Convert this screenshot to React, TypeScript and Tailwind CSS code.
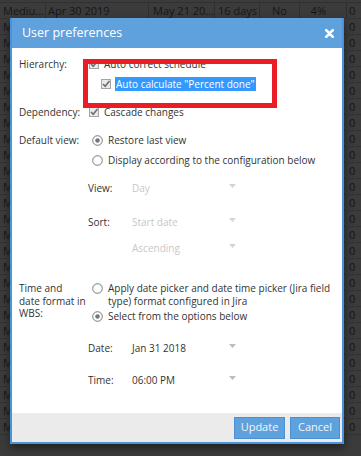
import React from 'react';

const font = { fontFamily: '"Open Sans", "Liberation Sans", sans-serif' };

const Check = ({ className = '' }: { className?: string }) => (
  <svg width="10" height="10" viewBox="0 0 10 10" className={className}>
    <rect x="0.5" y="0.5" width="9" height="9" fill="#e9e9e9" stroke="#a5a5a5" />
    <path d="M2 5 L4.2 7.2 L8.5 2" fill="none" stroke="#6e6e6e" strokeWidth="1.6" />
  </svg>
);

const Radio = ({ checked }: { checked?: boolean }) => (
  <svg width="11" height="11" viewBox="0 0 11 11" className="shrink-0">
    <circle cx="5.5" cy="5.5" r="4.8" fill="#fff" stroke="#777" strokeWidth="1" />
    {checked && <circle cx="5.5" cy="5.5" r="2.3" fill="#777" />}
  </svg>
);

const Arrow = ({ color = '#c9c9c9' }: { color?: string }) => (
  <svg width="7" height="4" viewBox="0 0 7 4">
    <path d="M0 0 L7 0 L3.5 4 Z" fill={color} />
  </svg>
);

const Select = ({ value, disabled }: { value: string; disabled?: boolean }) => (
  <div className="flex items-center w-[104px] justify-between">
    <span className={disabled ? 'text-[#c8c8c8]' : 'text-[#333]'}>{value}</span>
    <span className="mb-1"><Arrow color={disabled ? '#d4d4d4' : '#bdbdbd'} /></span>
  </div>
);

const rows = Array.from({ length: 26 });

export default function App() {
  return (
    <div className="relative w-[361px] h-[456px] overflow-hidden bg-[#3b3b3b] text-[11px] text-[#161616]" style={font}>
      {/* background grid, dimmed by overlay */}
      <div className="h-[3px] border-b border-[#303030]" />
      <div className="flex h-4 border-b border-[#333] leading-4">
        <div className="w-[46px] pl-[3px] border-r border-[#2e2e2e] truncate">Mediu...</div>
        <div className="w-[103px] pl-[2px] border-r border-[#2e2e2e]">Apr 30 2019</div>
        <div className="w-[66px] pl-[4px] border-r border-[#2e2e2e] truncate">May 21 20...</div>
        <div className="w-[45px] pl-[3px] border-r border-[#2e2e2e]">16 days</div>
        <div className="w-[40px] text-center border-r border-[#2e2e2e]">No</div>
        <div className="w-[47px] pr-[20px] text-right border-r border-[#2e2e2e]">4%</div>
        <div className="pl-[2px]">0</div>
      </div>
      {rows.map((_, i) => (
        <div key={i} className="flex h-4 border-b border-[#333] leading-4">
          <div className="w-[46px] pl-[3px] border-r border-[#2e2e2e] overflow-hidden whitespace-nowrap">M</div>
          <div className="w-[301px]" />
          <div className="pl-[2px]">0</div>
        </div>
      ))}

      {/* modal */}
      <div className="absolute left-[10px] top-[18px] w-[334px] h-[426px] flex flex-col bg-white border-x-2 border-b-2 border-[#4a93dc] shadow-[0_4px_8px_rgba(0,0,0,0.45)] text-[10px] text-[#333]">
        <div className="h-[30px] shrink-0 bg-[#5fa1dc] flex items-center justify-between pl-[10px] pr-[8px]">
          <span className="text-[12.5px] text-white">User preferences</span>
          <svg width="9" height="9" viewBox="0 0 9 9">
            <path d="M1.2 1.2 L7.8 7.8 M7.8 1.2 L1.2 7.8" stroke="#fff" strokeWidth="2.6" strokeLinecap="round" />
          </svg>
        </div>

        <div className="relative flex-1 pl-[7px] pt-[9px] leading-[14px]">
          <div className="flex h-[14px] items-center">
            <div className="w-[70px]">Hierarchy:</div>
            <Check />
            <span className="ml-[5px]">Auto correct schedule</span>
          </div>
          <div className="flex h-[14px] items-center mt-[6px] pl-[82px]">
            <Check />
            <span className="ml-[4px] bg-[#3399ff] text-white px-[1px]">Auto calculate "Percent done"</span>
          </div>
          <div className="flex h-[14px] items-center mt-[14px]">
            <div className="w-[70px]">Dependency:</div>
            <Check />
            <span className="ml-[5px]">Cascade changes</span>
          </div>
          <div className="flex h-[14px] items-center mt-[14px]">
            <div className="w-[73px]">Default view:</div>
            <Radio checked />
            <span className="ml-[5px]">Restore last view</span>
          </div>
          <div className="flex h-[14px] items-center mt-[6px] pl-[73px]">
            <Radio />
            <span className="ml-[5px]">Display according to the configuration below</span>
          </div>
          <div className="flex h-[14px] items-center mt-[14px] pl-[69px]">
            <div className="w-[44px]">View:</div>
            <Select value="Day" disabled />
          </div>
          <div className="flex h-[14px] items-center mt-[20px] pl-[69px]">
            <div className="w-[44px]">Sort:</div>
            <Select value="Start date" disabled />
          </div>
          <div className="flex h-[14px] items-center mt-[12px] pl-[113px]">
            <Select value="Ascending" disabled />
          </div>

          <div className="flex mt-[27px] leading-[12.5px]">
            <div className="w-[73px] shrink-0">Time and<br />date format in<br />WBS:</div>
            <div className="flex flex-col">
              <div className="flex items-start">
                <span className="mt-[1px]"><Radio /></span>
                <span className="ml-[5px]">Apply date picker and date time picker (Jira field<br />type) format configured in Jira</span>
              </div>
              <div className="flex items-center mt-[3px]">
                <Radio checked />
                <span className="ml-[5px]">Select from the options below</span>
              </div>
            </div>
          </div>
          <div className="flex h-[14px] items-center mt-[18px] pl-[69px]">
            <div className="w-[44px]">Date:</div>
            <Select value="Jan 31 2018" />
          </div>
          <div className="flex h-[14px] items-center mt-[18px] pl-[69px]">
            <div className="w-[44px]">Time:</div>
            <Select value="06:00 PM" />
          </div>

          {/* red annotation box */}
          <div className="absolute left-[71px] top-[11px] w-[194px] h-[49px] border-[5px] border-[#ea1c26]" />
        </div>

        <div className="h-[29px] shrink-0 bg-[#ebebeb] flex items-center justify-end gap-[5px] pr-[2px]">
          <button className="w-[51px] h-[22px] bg-[#5fa1dc] border border-[#4b90d2] text-[11px] text-[#f2f6fa]">Update</button>
          <button className="w-[50px] h-[22px] bg-[#5fa1dc] border border-[#4b90d2] text-[11px] text-[#f2f6fa]">Cancel</button>
        </div>
      </div>
    </div>
  );
}
